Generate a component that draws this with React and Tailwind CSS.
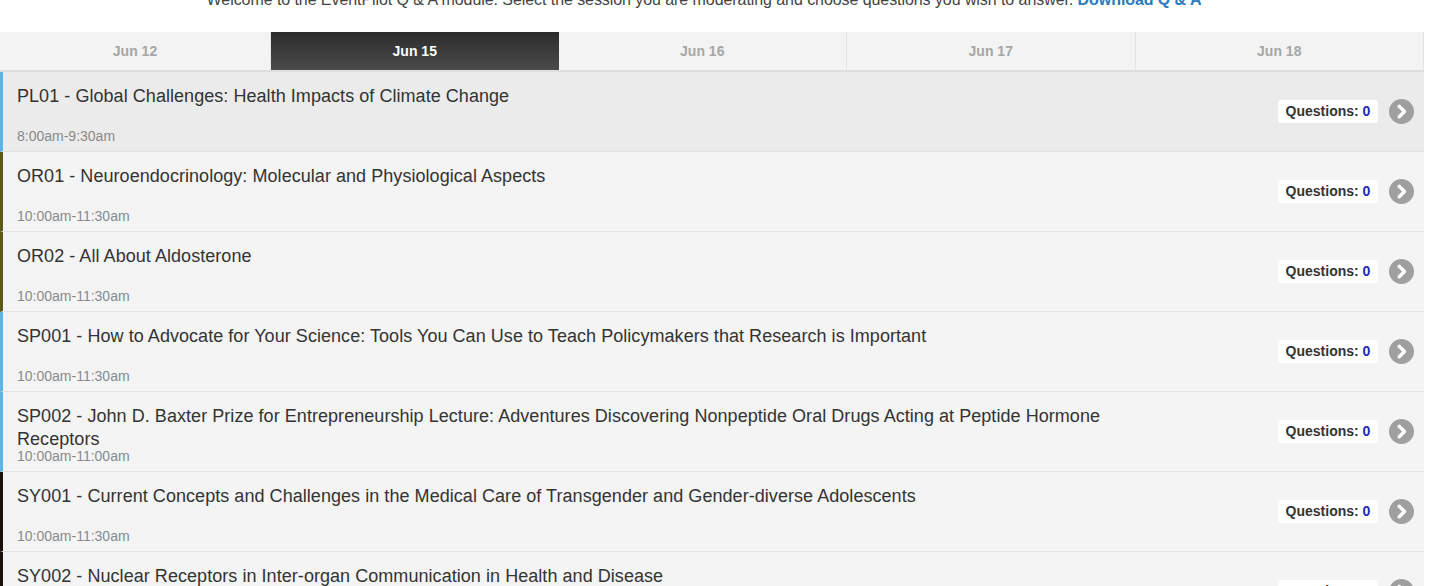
const tabs = ["Jun 12", "Jun 15", "Jun 16", "Jun 17", "Jun 18"];

const sessions = [
  { title: "PL01 - Global Challenges: Health Impacts of Climate Change", time: "8:00am-9:30am", color: "#5cb6e4", active: true },
  { title: "OR01 - Neuroendocrinology: Molecular and Physiological Aspects", time: "10:00am-11:30am", color: "#5b5a1c" },
  { title: "OR02 - All About Aldosterone", time: "10:00am-11:30am", color: "#5b5a1c" },
  { title: "SP001 - How to Advocate for Your Science: Tools You Can Use to Teach Policymakers that Research is Important", time: "10:00am-11:30am", color: "#5cb6e4" },
  { title: "SP002 - John D. Baxter Prize for Entrepreneurship Lecture: Adventures Discovering Nonpeptide Oral Drugs Acting at Peptide Hormone Receptors", time: "10:00am-11:00am", color: "#5cb6e4" },
  { title: "SY001 - Current Concepts and Challenges in the Medical Care of Transgender and Gender-diverse Adolescents", time: "10:00am-11:30am", color: "#1c120c" },
  { title: "SY002 - Nuclear Receptors in Inter-organ Communication in Health and Disease", time: "10:00am-11:30am", color: "#1c120c" },
];

function Chevron() {
  return (
    <svg width="25" height="25" viewBox="0 0 25 25" className="shrink-0">
      <circle cx="12.5" cy="12.5" r="12.5" fill="#9f9f9f" />
      <path d="M10.2 7.2 L15.5 12.5 L10.2 17.8" fill="none" stroke="#fff" strokeWidth="3.4" strokeLinecap="round" strokeLinejoin="round" />
    </svg>
  );
}

function SessionRow({ s }) {
  return (
    <div
      className={`flex h-[80px] shrink-0 border-b border-[#e1e1e1] border-l-[3px] ${s.active ? "bg-[#ebebeb]" : "bg-[#f4f4f4]"}`}
      style={{ borderLeftColor: s.color }}
    >
      <div className="flex-1 min-w-0 pl-[14px] flex flex-col">
        <div className="h-[56px] pt-[13px] max-w-[1120px] text-[18px] leading-[23px] text-[#333] tracking-[0.05px]">{s.title}</div>
        <div className="text-[14px] leading-[16px] text-[#8a8a8a]">{s.time}</div>
      </div>
      <div className="flex items-center gap-[11px] pr-[10px]">
        <div className="bg-white rounded-[3px] h-[23px] w-[100px] flex items-center justify-center text-[14px] font-bold text-[#333]">
          Questions:&nbsp;<span className="text-[#2424b8]">0</span>
        </div>
        <Chevron />
      </div>
    </div>
  );
}

export default function App() {
  return (
    <div className="w-[1430px] h-[586px] overflow-hidden bg-white font-['Liberation_Sans',Arial,sans-serif]">
      <div className="w-[1424px]">
        <div className="h-[32px] overflow-hidden">
          <p className="-mt-[9px] leading-[18px] text-[16px] tracking-[-0.07px] text-[#444] text-center pr-[16px]">
            Welcome to the EventPilot Q &amp; A module. Select the session you are moderating and choose questions you wish to answer.{" "}
            <span className="font-bold text-[#2b7bbd]">Download Q &amp; A</span>
          </p>
        </div>
        <div className="flex h-[40px] border-b-2 border-[#dedede] bg-[#f3f3f3]">
          {tabs.map((t, i) => (
            <div
              key={t}
              className={`${i === 0 ? "w-[271px]" : "flex-1"} flex items-center justify-center text-[14px] font-bold ${
                i === 1
                  ? "bg-gradient-to-b from-[#2c2c2c] to-[#4b4b4b] text-white"
                  : "text-[#a6a6a6] border-r border-[#e4e4e4]"
              }`}
            >
              {t}
            </div>
          ))}
        </div>
        <div className="flex flex-col">
          {sessions.map((s) => (
            <SessionRow key={s.title} s={s} />
          ))}
        </div>
      </div>
    </div>
  );
}
